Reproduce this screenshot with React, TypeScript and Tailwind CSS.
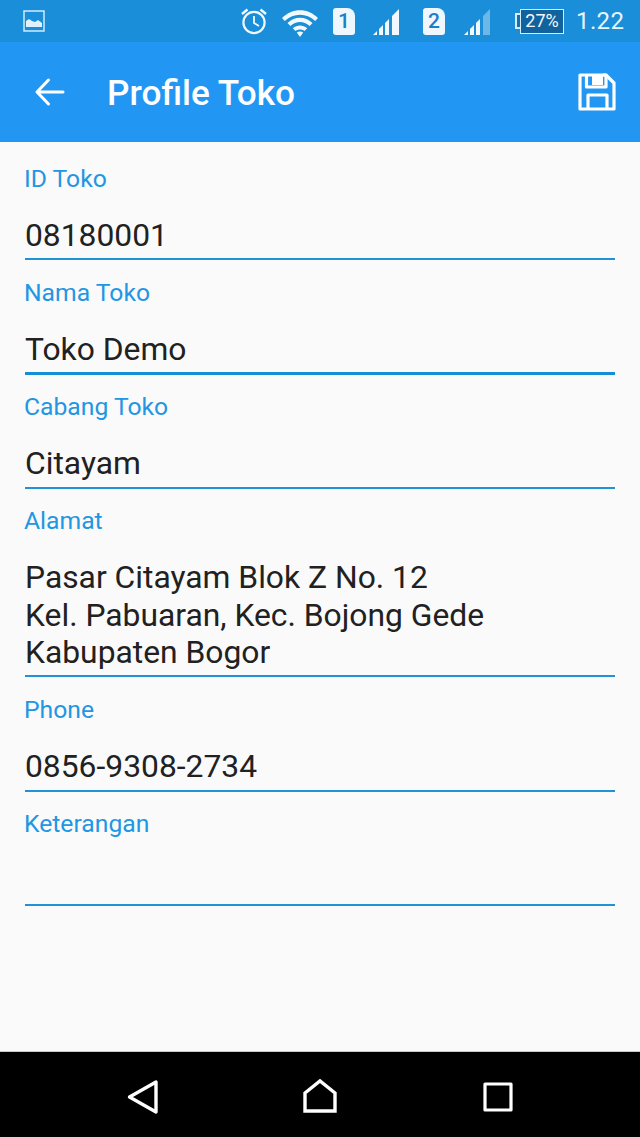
import React from "react";

function Field({ label, lines, focused }: { label: string; lines: string[]; focused?: boolean }) {
  return (
    <div className={focused ? "mx-[25px] border-b-[3px] border-[#148fd6] pt-[18.5px] pb-[3.2px]" : "mx-[25px] border-b-2 border-[#1f93d6] pt-[18.5px] pb-[4.2px]"}>
      <div className="-ml-px h-[28px] text-[24.7px] leading-[28px] text-[#2196e3]">{label}</div>
      <div className="mt-[24px] min-h-[37.6px] text-[31.8px] leading-[37.3px] text-[#212121]">
        {lines.map((l) => (
          <div key={l}>{l}</div>
        ))}
      </div>
    </div>
  );
}

function Signal({ faded }: { faded?: boolean }) {
  return (
    <svg className="mt-[4px] shrink-0" width="28" height="28" viewBox="0 0 28 28" fill="#f2f9fe">
      <path d="M1 26 L5 22 V26 Z" />
      <path d="M7 26 V20 L11 16 V26 Z" />
      <path d="M13 26 V14 L17 10 V26 Z" />
      <path d="M20 26 V7 L27 0 V26 Z" fill={faded ? "#6db7e6" : "#f2f9fe"} />
    </svg>
  );
}

function Sim({ n }: { n: string }) {
  return (
    <div className="mt-[1px] flex h-[27px] w-[22px] shrink-0 items-center justify-center rounded-[3px] rounded-tr-[8px] bg-[#eef7fd] text-[21px] leading-none font-medium text-[#1a80c8]">
      {n}
    </div>
  );
}

export default function App() {
  return (
    <div className="flex h-[1137px] w-[640px] flex-col bg-[#fafafa] font-['Roboto',sans-serif]">
      <div className="flex h-[42px] items-center bg-[#1a8ed8] pr-[8px] pl-[23px]">
        <svg className="shrink-0" width="22" height="22" viewBox="0 0 22 22">
          <rect x="1" y="1" width="20" height="20" fill="none" stroke="#cfeafb" strokeWidth="1.5" />
          <path d="M3 17 V11 L6 9 L9 11 L12 12 L15 10 L19 13 V17 Z" fill="#dff1fc" />
        </svg>
        <svg className="ml-[195px] shrink-0" width="28" height="28" viewBox="0 0 28 28" fill="none" stroke="#f0f8fe" strokeWidth="2.2">
          <circle cx="14" cy="15.5" r="10.6" />
          <path d="M14 9 V16 L19 19" strokeWidth="1.8" />
          <path d="M2 7 L7.5 2.5 M26 7 L20.5 2.5" strokeWidth="2.4" />
        </svg>
        <svg className="mt-[5px] ml-[14px] shrink-0" width="36" height="30" viewBox="0 0 36 30" fill="#f2f9fe">
          <path d="M0 9 C10 -1.5 26 -1.5 36 9 L33.2 12 C24.5 3.5 11.5 3.5 2.8 12 Z" />
          <path d="M5.5 14 C13 7 23 7 30.5 14 L27.7 17 C21.5 11.5 14.5 11.5 8.3 17 Z" />
          <path d="M10.8 19.3 C15 15.5 21 15.5 25.2 19.3 L22.5 22 C19.8 20 16.2 20 13.5 22 Z" />
          <path d="M14.8 23.5 C16.8 22.2 19.2 22.2 21.2 23.5 L18 28 Z" />
        </svg>
        <div className="ml-[15px]"><Sim n="1" /></div>
        <div className="ml-[17px]"><Signal /></div>
        <div className="ml-[23px]"><Sim n="2" /></div>
        <div className="ml-[18px]"><Signal faded /></div>
        <div className="ml-[24px] flex shrink-0 items-center">
          <div className="h-[16px] w-[5px] shrink-0 rounded-l-[1px] border-y-2 border-l-2 border-[#d5ecfb] bg-[#1a6fae]" />
          <div className="flex h-[25px] w-[44px] shrink-0 items-center justify-center border border-[#d5ecfb] bg-[#12639d] text-[18px] leading-none text-[#f2f9fe]">
            27%
          </div>
        </div>
        <div className="ml-[12px] shrink-0 text-[24px] leading-none tracking-[0.4px] text-[#e8f5fd]">1.22</div>
      </div>

      <div className="flex h-[100px] items-center bg-[#2196f3] pr-[24px] pl-[34px] text-white">
        <svg className="shrink-0" width="32" height="32" viewBox="0 0 32 32" fill="none" stroke="white" strokeWidth="3" strokeLinecap="round" strokeLinejoin="round">
          <path d="M3 16 H29 M14.5 4 L3 16 L14.5 28" />
        </svg>
        <div className="mt-[4px] ml-[41px] flex-1 text-[35.2px] leading-none font-medium text-[#fcfeff]">Profile Toko</div>
        <svg className="shrink-0" width="38" height="38" viewBox="0 0 38 38" fill="none" stroke="white" strokeWidth="3.2" strokeLinejoin="round">
          <path d="M2 2 H28 L36 10 V36 H2 Z" />
          <path d="M10 36 V22 H29 V36" />
          <path d="M14 2 H25 V12 H14 Z" fill="white" stroke="none" />
          <path d="M8.5 2 V14 H14" />
          <path d="M25 2 H28 V14 H14" />
        </svg>
      </div>

      <div className="flex-1 pt-[4px]">
        <Field label="ID Toko" lines={["08180001"]} />
        <Field label="Nama Toko" lines={["Toko Demo"]} focused />
        <Field label="Cabang Toko" lines={["Citayam"]} />
        <Field label="Alamat" lines={["Pasar Citayam Blok Z No. 12", "Kel. Pabuaran, Kec. Bojong Gede", "Kabupaten Bogor"]} />
        <Field label="Phone" lines={["0856-9308-2734"]} />
        <Field label="Keterangan" lines={[]} />
      </div>

      <div className="flex h-[86px] items-start border-t border-[#c8c8c8] bg-black pt-[27px]">
        <svg className="ml-[127px] shrink-0" width="32" height="36" viewBox="0 0 32 36" fill="none" stroke="white" strokeWidth="3.4" strokeLinejoin="round">
          <path d="M2.5 18 L29 3 V33 Z" />
        </svg>
        <svg className="-mt-[1px] ml-[143px] shrink-0" width="36" height="36" viewBox="0 0 36 36" fill="none" stroke="white" strokeWidth="3.4" strokeLinejoin="miter">
          <path d="M3 33 V15 L18 3 L33 15 V33 Z" />
        </svg>
        <svg className="mt-[3px] ml-[145px] shrink-0" width="30" height="30" viewBox="0 0 30 30" fill="none" stroke="white" strokeWidth="3.2" strokeLinejoin="round">
          <rect x="2" y="2" width="26" height="26" />
        </svg>
      </div>
    </div>
  );
}
